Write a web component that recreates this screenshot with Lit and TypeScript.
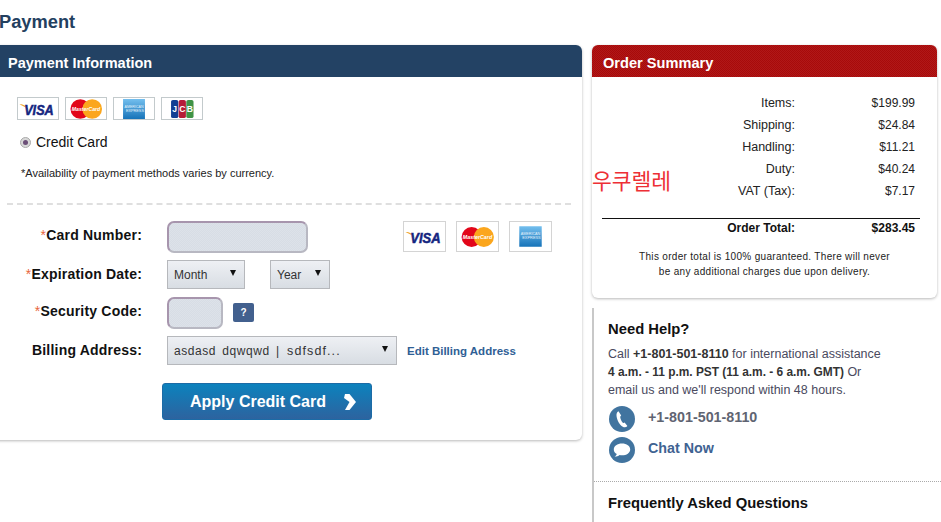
import { LitElement, html, css } from "lit";
import { customElement } from "lit/decorators.js";

const visa = (w: number, h: number) => html`<svg width=${w} height=${h} viewBox="0 0 42 23">
  <path d="M1.5 6.5 C5 6.3 8.5 7.6 11 12.5 C9 9.8 6 8.6 1.5 6.5Z" fill="#f0a52c"/>
  <text x="6.5" y="17.5" font-family="Liberation Sans" font-size="15.5" font-weight="700" font-style="italic" fill="#14257f" stroke="#14257f" stroke-width=".55" textLength="31" lengthAdjust="spacingAndGlyphs">VISA</text>
</svg>`;
const mc = (w: number, h: number) => html`<svg width=${w} height=${h} viewBox="0 0 42 23">
  <circle cx="15" cy="11.5" r="10.3" fill="#e2061a"/>
  <circle cx="27.5" cy="11.5" r="10.3" fill="#fba61d"/>
  <text x="21" y="13.6" text-anchor="middle" font-family="Liberation Sans" font-size="6" font-weight="700" font-style="italic" fill="#fff" textLength="30" lengthAdjust="spacingAndGlyphs">MasterCard</text>
</svg>`;
const amex = (w: number, h: number) => html`<svg width=${w} height=${h} viewBox="0 0 42 23">
  <defs><linearGradient id="ax" x1="0" y1="0" x2="0" y2="1"><stop offset="0" stop-color="#74bfee"/><stop offset="1" stop-color="#1673b9"/></linearGradient></defs>
  <rect x="9.5" y="1" width="23" height="21" fill="url(#ax)"/>
  <text x="21" y="10" text-anchor="middle" font-family="Liberation Sans" font-size="4.4" fill="#e6f3fc" textLength="20" lengthAdjust="spacingAndGlyphs">AMERICAN</text>
  <text x="22" y="14.5" text-anchor="middle" font-family="Liberation Sans" font-size="4.4" fill="#e6f3fc" textLength="19" lengthAdjust="spacingAndGlyphs">EXPRESS</text>
</svg>`;
const jcb = (w: number, h: number) => html`<svg width=${w} height=${h} viewBox="0 0 42 23">
  <rect x="9.5" y="2" width="7.6" height="19" rx="2" fill="#123f94"/>
  <rect x="17.5" y="2" width="7.6" height="19" rx="2" fill="#b51c38"/>
  <rect x="25.5" y="2" width="7.6" height="19" rx="2" fill="#3f9345"/>
  <text x="13.3" y="15" text-anchor="middle" font-family="Liberation Sans" font-size="9" font-weight="700" fill="#fff">J</text>
  <text x="21.3" y="15" text-anchor="middle" font-family="Liberation Sans" font-size="9" font-weight="700" fill="#fff">C</text>
  <text x="29.3" y="15" text-anchor="middle" font-family="Liberation Sans" font-size="9" font-weight="700" fill="#fff">B</text>
</svg>`;

const phoneIcon = html`<svg width="26" height="26" viewBox="0 0 26 26">
  <circle cx="13" cy="13" r="13" fill="#41749f"/>
  <path d="M9.5 5.2 C7.8 6 7.2 8 7.6 10.6 C8.2 14.6 10.6 19 13.8 20.8 C15.6 21.8 17.2 21.4 18.4 20 L15.6 16.6 C15 17 14.4 17.2 13.8 16.8 C12.4 15.4 11.4 12.8 11.2 11 C11.2 10.4 11.6 10 12.2 9.6 Z" fill="#fff"/>
</svg>`;
const chatIcon = html`<svg width="26" height="26" viewBox="0 0 26 26">
  <circle cx="13" cy="13" r="13" fill="#41749f"/>
  <path d="M13 6.5 C8.4 6.5 4.8 9 4.8 12.4 C4.8 14.4 6 16 7.8 17 C7.4 18.2 6.6 19 5.6 19.8 C7.6 19.6 9.4 19 10.6 18 C11.4 18.2 12.2 18.3 13 18.3 C17.6 18.3 21.2 15.8 21.2 12.4 C21.2 9 17.6 6.5 13 6.5Z" fill="#fff"/>
</svg>`;
const chevron = html`<svg width="13" height="16" viewBox="0 0 13 16"><path d="M2 0 H6.5 L13 8 L6.5 16 H2 L6.5 8 L1 4Z" fill="#fff"/></svg>`;

@customElement("app-root")
export class AppRoot extends LitElement {
  static styles = css`
    :host { display: block; width: 941px; height: 522px; overflow: hidden; background: #fff; font-family: "Liberation Sans", Arial, sans-serif; color: #111; }
    .page { display: grid; grid-template-columns: 590px 345px; column-gap: 10px; margin-left: -8px; align-items: start; }
    h1 { grid-column: 1 / 3; margin: 0; height: 45px; font-size: 18.3px; line-height: 44px; font-weight: 700; color: #23405f; padding-left: 7px; }
    .panel { background: #fff; border-radius: 6px; box-shadow: 0 1px 3px rgba(0,0,0,.28); overflow: hidden; }
    .head { height: 32px; line-height: 36px; color: #fff; font-weight: 700; font-size: 14.6px; }
    .blue { background: #234264; padding-left: 16px; font-size: 14.5px; }
    .red { background: repeating-conic-gradient(#a70a0a 0 25%, #b01818 0 50%) 0 0 / 2px 2px; padding-left: 11px; }
    .pay { height: 395px; }
    .logos { display: flex; gap: 6px; margin: 20px 0 0 25px; }
    .logo { width: 42px; height: 23px; box-sizing: border-box; border: 1px solid #c3cacc; background: #fff; display: flex; align-items: center; justify-content: center; }
    .logo svg { flex: none; }
    .radio-row { display: flex; align-items: center; gap: 5px; margin: 12px 0 0 28px; height: 20px; font-size: 14px; color: #111; }
    .radio { width: 11px; height: 11px; border-radius: 50%; background: #d8d8d8; border: 1px solid #aaa; box-sizing: border-box; display: flex; align-items: center; justify-content: center; }
    .radio i { width: 5px; height: 5px; border-radius: 50%; background: #6c4f78; display: block; }
    .avail { margin: 14px 0 0 29px; font-size: 11px; line-height: 14px; color: #222; }
    .dash { margin: 23px 11px 0 15px; border-top: 2px dashed #dfdfdf; height: 0; }
    .form { position: relative; display: grid; grid-template-columns: 150px 1fr; column-gap: 25px; margin-top: 16px; }
    .lbl { text-align: right; font-size: 14px; font-weight: 700; letter-spacing: 0.2px; color: #111; }
    .lbl b { color: #e8663d; font-weight: 400; }
    .l1 { line-height: 28px; height: 32px; }
    .l2 { line-height: 29px; height: 29px; margin-top: 7px; }
    .l3 { line-height: 28px; height: 32px; margin-top: 8px; }
    .l4 { line-height: 28px; height: 29px; margin-top: 7px; }
    .r1 { height: 32px; display: flex; }
    .r2 { height: 29px; margin-top: 7px; display: flex; gap: 25px; }
    .r3 { height: 32px; margin-top: 8px; display: flex; gap: 10px; }
    .r4 { height: 29px; margin-top: 7px; display: flex; gap: 10px; align-items: center; }
    .input { height: 32px; box-sizing: border-box; border-radius: 7px; border: 2px solid #b8b8c2; border-top-color: #a795ad; border-left-color: #a795ad; background: repeating-conic-gradient(#d7dde5 0 25%, #dde2e9 0 50%) 0 0 / 2px 2px; }
    .w141 { width: 141px; } .w56 { width: 56px; }
    .sel { height: 29px; box-sizing: border-box; border: 1px solid #b6b8bc; background: linear-gradient(#eef0f4, #d8dde3); display: flex; align-items: center; justify-content: space-between; font-size: 12px; color: #333; padding: 0 8px 0 6px; }
    .sel i { width: 0; height: 0; border-left: 3.5px solid transparent; border-right: 3.5px solid transparent; border-top: 6px solid #111; margin-top: -4px; }
    .m { width: 78px; } .y { width: 60px; } .b { width: 230px; }
    .b span { letter-spacing: 0.55px; word-spacing: -0.7px; white-space: pre; }
    .b span span { letter-spacing: 1.1px; word-spacing: 0; font-size: 12.5px; margin-left: 1px; }
    .help { align-self: center; width: 21px; height: 19px; border-radius: 2px; background: #42608e; color: #fff; font-size: 10px; font-weight: 700; text-align: center; line-height: 19px; margin-top: -1px; }
    a { color: #2f6095; font-size: 11.5px; font-weight: 700; text-decoration: none; }
    .cards { position: absolute; left: 411px; top: 0; display: flex; gap: 10px; }
    .cards .logo { width: 43px; height: 31px; border: 1px solid #d4d4d4; }
    .btn { grid-column: 2; margin: 18px 0 0 -5px; width: 210px; height: 37px; box-sizing: border-box; border: 1px solid #1c6ba6; border-radius: 3px; background: linear-gradient(#0c82bd, #2d639f); color: #fff; font-size: 16px; font-weight: 700; display: flex; align-items: center; padding: 0 15px 0 27px; justify-content: space-between; }
    .side { display: flex; flex-direction: column; }
    .sum { height: 253px; }
    .tbl { display: grid; grid-template-columns: 1fr auto 120px; margin: 15px 22px 0 0; grid-auto-rows: 22px; font-size: 12px; line-height: 22px; color: #222; }
    .kr { grid-column: 1; grid-row: 4 / 6; font-family: "Noto Sans CJK KR", sans-serif; font-size: 21.5px; line-height: 30px; color: #ed2f35; align-self: start; margin-top: 7px; white-space: nowrap; }
    .lab { grid-column: 2; text-align: right; font-size: 12.5px; }
    .val { grid-column: 3; text-align: right; }
    .tot { display: grid; grid-template-columns: 1fr 120px; margin: 16px 17px 0 10px; border-top: 1px solid #111; font-size: 12px; font-weight: 700; line-height: 18px; padding-right: 5px; }
    .tot div { text-align: right; }
    .note { margin: 12px 0 0 0; text-align: center; font-size: 10px; letter-spacing: 0.31px; line-height: 15px; color: #222; }
    .needs { margin-top: 10px; border-left: 2px solid #c8c8c8; height: 214px; width: 349px; box-sizing: border-box; }
    .in { padding: 13px 0 0 14px; height: 174px; box-sizing: border-box; border-bottom: 1px dotted #aaa; }
    h2 { margin: 0; font-size: 14.8px; line-height: 16px; font-weight: 700; color: #111; }
    .txt { margin: 8px 0 0; font-size: 12.5px; line-height: 18px; color: #4a4a5e; white-space: nowrap; }
    .txt b { color: #333; }
    .txt b.tight { font-size: 11.9px; }
    .act { display: flex; gap: 13px; align-items: flex-start; height: 31px; font-size: 14.3px; font-weight: 700; line-height: 22px; color: #5f6472; margin-left: 1px; }
    .act.first { margin-top: 7px; }
    .act.chat { color: #3f6392; }
    .faq { padding: 13px 0 0 14px; }
  `;

  render() {
    const rows = [["Items:", "$199.99"], ["Shipping:", "$24.84"], ["Handling:", "$11.21"], ["Duty:", "$40.24"], ["VAT (Tax):", "$7.17"]];
    return html`<div class="page">
      <h1>Payment</h1>
      <div class="panel pay">
        <div class="head blue">Payment Information</div>
        <div class="logos">
          <div class="logo">${visa(40, 22)}</div><div class="logo">${mc(40, 22)}</div><div class="logo">${amex(40, 22)}</div><div class="logo">${jcb(40, 22)}</div>
        </div>
        <div class="radio-row"><span class="radio"><i></i></span>Credit Card</div>
        <div class="avail">*Availability of payment methods varies by currency.</div>
        <div class="dash"></div>
        <div class="form">
          <div class="lbl l1"><b>*</b>Card Number:</div>
          <div class="r1"><div class="input w141"></div></div>
          <div class="lbl l2"><b>*</b>Expiration Date:</div>
          <div class="r2">
            <div class="sel m"><span>Month</span><i></i></div>
            <div class="sel y"><span>Year</span><i></i></div>
          </div>
          <div class="lbl l3"><b>*</b>Security Code:</div>
          <div class="r3"><div class="input w56"></div><div class="help">?</div></div>
          <div class="lbl l4">Billing Address:</div>
          <div class="r4">
            <div class="sel b"><span>asdasd  dqwqwd  |  <span>sdfsdf...</span></span><i></i></div>
            <a href="#">Edit Billing Address</a>
          </div>
          <div class="btn"><span>Apply Credit Card</span>${chevron}</div>
          <div class="cards">
            <div class="logo">${visa(41, 24)}</div><div class="logo">${mc(41, 24)}</div><div class="logo">${amex(41, 29)}</div>
          </div>
        </div>
      </div>
      <div class="side">
        <div class="panel sum">
          <div class="head red">Order Summary</div>
          <div class="tbl">
            <div class="kr">우쿠렐레</div>
            ${rows.map(r => html`<div class="lab">${r[0]}</div><div class="val">${r[1]}</div>`)}
          </div>
          <div class="tot"><div>Order Total:</div><div>$283.45</div></div>
          <div class="note">This order total is 100% guaranteed. There will never<br>be any additional charges due upon delivery.</div>
        </div>
        <div class="needs">
          <div class="in">
            <h2>Need Help?</h2>
            <p class="txt">Call <b>+1-801-501-8110</b> for international assistance<br><b class="tight">4 a.m. - 11 p.m. PST (11 a.m. - 6 a.m. GMT)</b> Or<br>email us and we'll respond within 48 hours.</p>
            <div class="act first">${phoneIcon}<span>+1-801-501-8110</span></div>
            <div class="act chat">${chatIcon}<span>Chat Now</span></div>
          </div>
          <div class="faq"><h2>Frequently Asked Questions</h2></div>
        </div>
      </div>
    </div>`;
  }
}
